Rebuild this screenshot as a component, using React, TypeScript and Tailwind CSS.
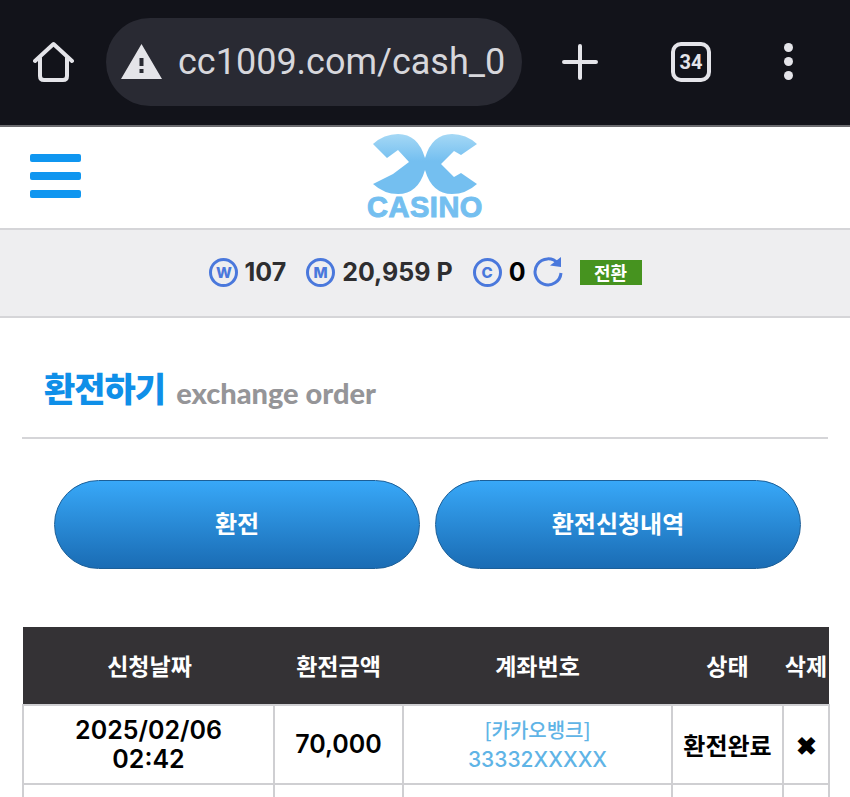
import React from "react";

const cjk = "font-['Noto_Sans_CJK_KR',sans-serif]";

function Coin({ letter }: { letter: string }) {
  return (
    <span className="flex h-[29px] w-[29px] items-center justify-center rounded-full border-[3px] border-[#4a78dc] font-['Inter',sans-serif] text-[15px] font-extrabold leading-none text-[#4a78dc]">
      {letter}
    </span>
  );
}

function Logo() {
  return (
    <div className="flex w-[124px] flex-col items-center">
      <svg width="106" height="62" viewBox="0 0 106 62" className="-mb-[3px]">
        <defs>
          <linearGradient id="lg" x1="0" y1="0" x2="0" y2="1">
            <stop offset="0" stopColor="#a5d8f5" />
            <stop offset="0.45" stopColor="#74bff0" />
            <stop offset="1" stopColor="#74bff0" />
          </linearGradient>
        </defs>
        <path
          fill="url(#lg)"
          d="M1 11 Q12 1 26 1 Q46 1 53 25 L53 37 Q46 61 26 61 Q12 61 1 51 L21 41 L37 29 L26 17 L15 25 Z"
        />
        <path
          fill="url(#lg)"
          d="M105 11 Q94 1 80 1 Q60 1 53 25 L53 37 Q60 61 80 61 Q94 61 105 51 L89 40 L82 44 L69 31 L82 18 L89 22 Z"
        />
      </svg>
      <span className="font-['Liberation_Sans',sans-serif] text-[29px] font-bold leading-[30px] tracking-[0.5px] text-[#74bff0] [-webkit-text-stroke:1px_#74bff0]">
        CASINO
      </span>
    </div>
  );
}

export default function App() {
  return (
    <div className={`h-[797px] w-[850px] overflow-hidden bg-white ${cjk}`}>
      {/* browser bar */}
      <div className="flex h-[127px] items-center border-b-2 border-[#6b6b6f] bg-[#12131a] pb-[2px] pl-[33px]">
        <svg width="41" height="42" viewBox="0 0 41 42" fill="none" stroke="#e4e4e9" strokeWidth="4" strokeLinejoin="round" strokeLinecap="round">
          <path d="M2 20 L20.5 3 L39 20" />
          <path d="M7 17 V35 Q7 39 11 39 H30 Q34 39 34 35 V17" />
        </svg>
        <div className="ml-[32px] flex h-[88px] w-[416px] items-center rounded-[44px] bg-[#292a33] pl-[15px]">
          <svg width="41" height="36" viewBox="0 0 41 36">
            <path fill="#e4e4e9" fillRule="evenodd" d="M20.5 0 L41 35 H0 Z M18.5 14 H22.5 V22 H18.5 Z M18.5 25 H22.5 V29 H18.5 Z" />
          </svg>
          <span className="ml-[16px] w-[328px] overflow-hidden whitespace-nowrap font-['Roboto',sans-serif] text-[36px] leading-none text-[#d7d7dc]">
            cc1009.com/cash_02
          </span>
        </div>
        <svg width="36" height="36" viewBox="0 0 36 36" className="ml-[40px]" stroke="#e4e4e9" strokeWidth="4" strokeLinecap="round">
          <path d="M18 2 V34 M2 18 H34" />
        </svg>
        <div className="ml-[73px] flex h-[40px] w-[40px] items-center justify-center rounded-[10px] border-[4px] border-[#e4e4e9] font-['Roboto',sans-serif] text-[20px] font-bold leading-none text-[#e4e4e9]">
          34
        </div>
        <div className="ml-[73px] flex flex-col gap-[5px]">
          <span className="h-[9px] w-[9px] rounded-full bg-[#e4e4e9]" />
          <span className="h-[9px] w-[9px] rounded-full bg-[#e4e4e9]" />
          <span className="h-[9px] w-[9px] rounded-full bg-[#e4e4e9]" />
        </div>
      </div>

      {/* site header */}
      <div className="relative flex h-[103px] items-center justify-center border-b-2 border-[#d5d5d8]">
        <div className="absolute left-[30px] top-[27px] flex flex-col gap-[10px]">
          <span className="h-[8px] w-[51px] rounded-[2px] bg-[#0f96f0]" />
          <span className="h-[8px] w-[51px] rounded-[2px] bg-[#0f96f0]" />
          <span className="h-[8px] w-[51px] rounded-[2px] bg-[#0f96f0]" />
        </div>
        <Logo />
      </div>

      {/* balance bar */}
      <div className="flex h-[88px] items-center justify-center border-b-2 border-[#d5d5d8] bg-[#eeeef0] pl-[1px] pb-[2px] font-['Inter',sans-serif] text-[25px] font-bold leading-none text-[#2e2e30]">
        <Coin letter="W" />
        <span className="ml-[6px]">107</span>
        <span className="ml-[20px]"><Coin letter="M" /></span>
        <span className="ml-[7px]">20,959 P</span>
        <span className="ml-[20px]"><Coin letter="C" /></span>
        <span className="ml-[7px] text-black">0</span>
        <svg width="30" height="30" viewBox="0 0 30 30" fill="none" className="ml-[7px]">
          <path d="M25 6.5 A13 13 0 1 0 28 16" stroke="#4a78dc" strokeWidth="3" />
          <path d="M17 8.5 L28 10 L28 0 Z" fill="#4a78dc" />
        </svg>
        <span className={`ml-[17px] flex h-[25px] w-[62px] items-center justify-center bg-[#46931f] text-[18px] font-bold leading-none text-white ${cjk}`}>
          전환
        </span>
      </div>

      {/* title */}
      <div className="mx-[22px] mt-[47px] flex h-[74px] items-start border-b-2 border-[#d5d5d8] pl-[22px]">
        <span className="text-[34px] font-black leading-[46px] tracking-[-1px] text-[#0f8fe8]">환전하기</span>
        <span className="ml-[11px] mt-[5px] font-['Lato',sans-serif] text-[29px] font-black leading-[46px] text-[#959598]">exchange order</span>
      </div>

      {/* buttons */}
      <div className="mt-[41px] flex justify-between px-[54px] pr-[49px] pb-[58px] gap-[15px]">
        <button className="h-[89px] flex-1 rounded-[45px] border border-[#1c5f98] bg-gradient-to-b from-[#38a8f8] to-[#1a6cb4] pb-[4px] text-[24px] font-bold text-white">
          환전
        </button>
        <button className="h-[89px] flex-1 rounded-[45px] border border-[#1c5f98] bg-gradient-to-b from-[#38a8f8] to-[#1a6cb4] pb-[4px] text-[24px] font-bold text-white">
          환전신청내역
        </button>
      </div>

      {/* table */}
      <table className="mx-[22px] w-[806px] table-fixed border-collapse">
        <colgroup>
          <col className="w-[251px]" />
          <col className="w-[129px]" />
          <col className="w-[269px]" />
          <col className="w-[111px]" />
          <col className="w-[46px]" />
        </colgroup>
        <thead>
          <tr className="h-[78px] bg-[#343235] text-[23px] font-bold text-white">
            <th className="whitespace-nowrap pl-[2px] font-bold">신청날짜</th>
            <th className="whitespace-nowrap font-bold">환전금액</th>
            <th className="whitespace-nowrap font-bold">계좌번호</th>
            <th className="whitespace-nowrap font-bold">상태</th>
            <th className="whitespace-nowrap font-bold">삭제</th>
          </tr>
        </thead>
        <tbody>
          <tr className="h-[79px] text-center text-[25px] font-semibold leading-[29px] text-black [&>td]:border-2 [&>td]:border-[#cfcfd2]">
            <td className="font-['Inter',sans-serif]">2025/02/06<br />02:42</td>
            <td className="font-['Inter',sans-serif]">70,000</td>
            <td className="text-[20px] leading-[29px] text-[#5fb4e6] font-medium">[카카오뱅크]<br /><span className="font-['Inter',sans-serif] text-[21px]">33332XXXXX</span></td>
            <td className="text-[24px] font-bold">환전완료</td>
            <td className="text-[25px] font-black">✖</td>
          </tr>
          <tr className="h-[79px] [&>td]:border-2 [&>td]:border-[#cfcfd2]">
            <td /><td /><td /><td /><td />
          </tr>
        </tbody>
      </table>
    </div>
  );
}
